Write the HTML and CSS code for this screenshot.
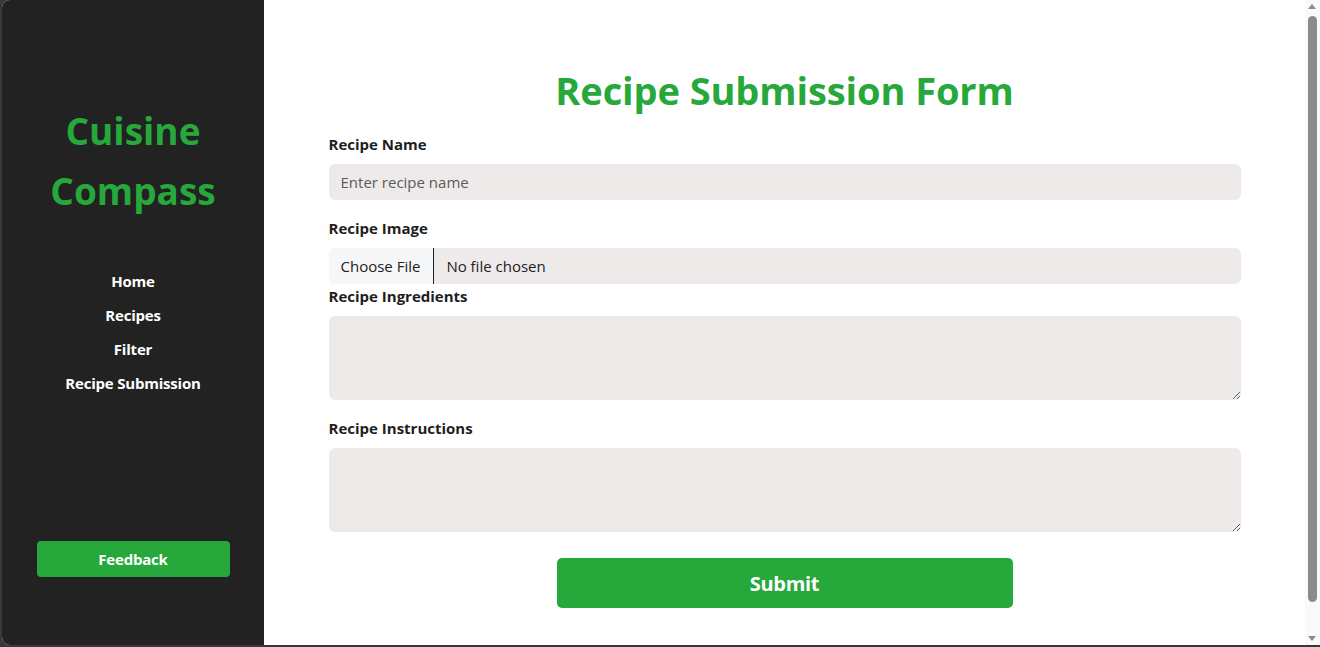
FILE: index.html
```html
<!DOCTYPE html>
<html lang="en">
<head>
<meta charset="utf-8">
<title>Recipe Submission</title>
<link rel="stylesheet" href="styles.css">
</head>
<body>
<div class="frame">
  <div class="app">
    <aside class="sidebar">
      <h1 class="brand">Cuisine<br>Compass</h1>
      <nav class="nav">
        <a href="#">Home</a>
        <a href="#">Recipes</a>
        <a href="#">Filter</a>
        <a href="#">Recipe Submission</a>
      </nav>
      <button class="feedback" type="button">Feedback</button>
    </aside>
    <main class="main">
      <h2 class="title">Recipe Submission Form</h2>
      <form class="form">
        <label class="label" for="name">Recipe Name</label>
        <input class="text-input" id="name" type="text" placeholder="Enter recipe name">
        <label class="label" for="image">Recipe Image</label>
        <input class="file-input" id="image" type="file">
        <label class="label" for="ingredients">Recipe Ingredients</label>
        <textarea class="area" id="ingredients"></textarea>
        <label class="label" for="instructions">Recipe Instructions</label>
        <textarea class="area" id="instructions"></textarea>
        <button class="submit" type="button">Submit</button>
      </form>
    </main>
    <div class="scrollbar">
      <span class="arrow arrow-up"></span>
      <span class="thumb"></span>
      <span class="arrow arrow-down"></span>
    </div>
  </div>
</div>
</body>
</html>
```

FILE: styles.css
```css
* { box-sizing: border-box; }

html, body {
  margin: 0;
  height: 100%;
  overflow: hidden;
}

body {
  background: #383838;
  font-family: "Open Sans", "Noto Sans", sans-serif;
}

.frame {
  height: 647px;
  padding: 0 0 2px 2px;
}

.app {
  position: relative;
  display: flex;
  height: 645px;
  border-radius: 8px 0 0 8px;
  overflow: hidden;
  background: #ffffff;
}

.sidebar {
  width: 262px;
  flex: none;
  background: #222222;
  display: flex;
  flex-direction: column;
  align-items: center;
  padding: 101px 0 68px;
}

.brand {
  margin: 0;
  color: #26a83b;
  font-size: 37px;
  line-height: 60px;
  font-weight: 700;
  text-align: center;
  letter-spacing: 0;
}

.nav {
  margin-top: 50px;
  display: flex;
  flex-direction: column;
  align-items: center;
  gap: 14px;
}

.nav a {
  color: #ffffff;
  text-decoration: none;
  font-size: 15px;
  line-height: 20px;
  font-weight: 700;
  letter-spacing: -0.2px;
}

.feedback {
  margin-top: auto;
  width: 193px;
  height: 36px;
  border: none;
  border-radius: 4px;
  background: #26a83b;
  color: #ffffff;
  font-family: inherit;
  font-size: 15px;
  font-weight: 700;
  letter-spacing: -0.2px;
}

.main {
  flex: 1;
  padding: 66px 0 0;
  margin-right: 15px;
}

.title {
  margin: 0;
  text-align: center;
  color: #26a83b;
  font-size: 38px;
  line-height: 48px;
  font-weight: 700;
  letter-spacing: -0.1px;
}

.form {
  width: 912px;
  margin: 20px auto 0;
  display: flex;
  flex-direction: column;
}

.label {
  color: #1e1e1e;
  font-size: 15px;
  line-height: 20px;
  font-weight: 700;
  letter-spacing: 0;
}

.text-input,
.file-input,
.area {
  width: 100%;
  border: none;
  border-radius: 6px;
  background: #eeeaea;
  font-family: inherit;
  font-size: 15px;
  color: #222;
  outline: none;
}

.text-input {
  height: 36px;
  margin: 10px 0 18px;
  padding: 0 12px;
}

.text-input::placeholder {
  color: #5a5a5a;
}

.file-input {
  height: 36px;
  margin: 10px 0 2px;
  padding: 0;
  overflow: hidden;
}

.file-input::file-selector-button {
  height: 36px;
  margin: 0 12px 0 0;
  padding: 0 13px 0 12px;
  border: none;
  border-right: 1px solid #222;
  background: #f6f7f9;
  color: #222;
  font-family: inherit;
  font-size: 15px;
}

.area {
  height: 84px;
  margin: 10px 0 18px;
  padding: 8px 12px;
  resize: vertical;
  display: block;
}

.submit {
  align-self: center;
  width: 456px;
  height: 50px;
  margin-top: 8px;
  border: none;
  border-radius: 5px;
  background: #26a83b;
  color: #ffffff;
  font-family: inherit;
  font-size: 20px;
  font-weight: 700;
  letter-spacing: -0.3px;
}

.scrollbar {
  position: absolute;
  top: 0;
  right: 0;
  width: 15px;
  height: 100%;
  background: #fafafa;
}

.thumb {
  position: absolute;
  left: 3px;
  top: 16px;
  width: 9px;
  height: 586px;
  border-radius: 5px;
  background: #8b8b8b;
}

.arrow {
  position: absolute;
  left: 3px;
  width: 0;
  height: 0;
  border-left: 4.5px solid transparent;
  border-right: 4.5px solid transparent;
}

.arrow-up {
  top: 4px;
  border-bottom: 5px solid #8b8b8b;
}

.arrow-down {
  bottom: 4px;
  border-top: 5px solid #8b8b8b;
}
```
